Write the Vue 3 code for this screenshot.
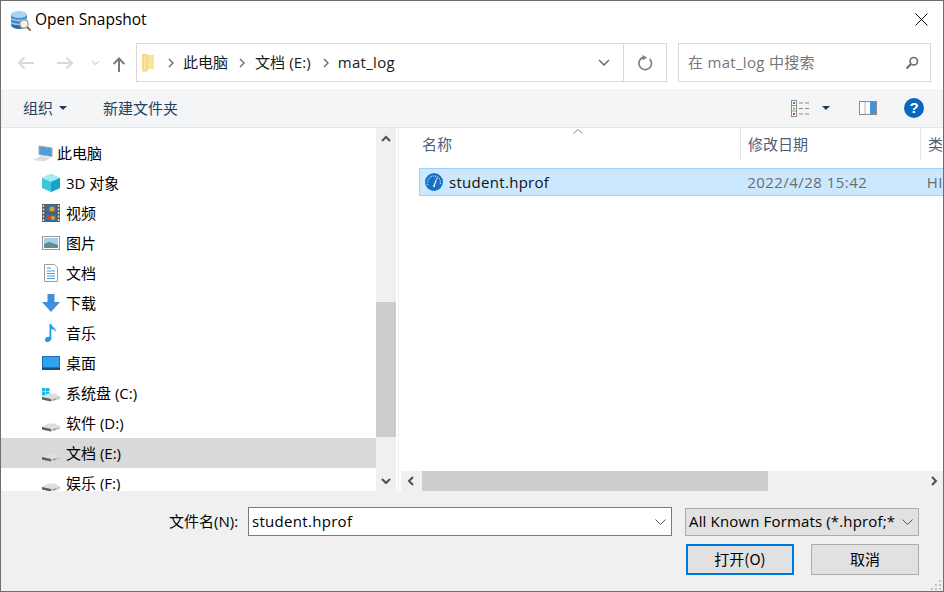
<script setup>
const nav = [
  { label: '3D 对象', icon: 'cube' },
  { label: '视频', icon: 'film' },
  { label: '图片', icon: 'pic' },
  { label: '文档', icon: 'doc' },
  { label: '下载', icon: 'down' },
  { label: '音乐', icon: 'music' },
  { label: '桌面', icon: 'desk' },
  { label: '系统盘 (C:)', icon: 'sys' },
  { label: '软件 (D:)', icon: 'drive' },
  { label: '文档 (E:)', icon: 'drive', active: true },
  { label: '娱乐 (F:)', icon: 'drive' },
]
</script>

<template>
  <div class="win">
    <header class="title">
      <svg class="appicon" width="22" height="22" viewBox="0 0 22 22">
        <ellipse cx="9" cy="15" rx="8" ry="4" fill="#2a70b0"/>
        <rect x="1" y="4" width="16" height="11" fill="#3f8fcf"/>
        <path d="M1 8.500c2 2.500 14 2.500 16 0M1 12.500c2 2.500 14 2.500 16 0" stroke="#cfe6f6" fill="none"/>
        <ellipse cx="9" cy="4.500" rx="8" ry="3.500" fill="#a9d3ee"/>
        <circle cx="14" cy="14" r="4.200" fill="#eef4f7" stroke="#9a9a90" stroke-width="1.300"/>
        <path d="M17 17l3.600 3.600" stroke="#8a6a4a" stroke-width="2"/>
      </svg>
      <span class="title-text">Open Snapshot</span>
      <svg class="close" width="13" height="13" viewBox="0 0 13 13"><path d="M.5.500l12 12M12.500.500l-12 12" stroke="#111" fill="none"/></svg>
    </header>

    <div class="addr">
      <svg class="nb" width="18" height="14" viewBox="0 0 18 14"><path d="M17 7H2M7.500 1.500L2 7l5.500 5.500" stroke="#d9d9d9" stroke-width="2" fill="none"/></svg>
      <svg class="nb nb2" width="18" height="14" viewBox="0 0 18 14"><path d="M1 7h15M10.500 1.500L16 7l-5.500 5.500" stroke="#d9d9d9" stroke-width="2" fill="none"/></svg>
      <svg class="nb nb3" width="9" height="6" viewBox="0 0 9 6"><path d="M1 1l3.500 3.500L8 1" stroke="#d9d9d9" stroke-width="1.500" fill="none"/></svg>
      <svg class="nb nb4" width="12" height="15" viewBox="0 0 12 15"><path d="M6 15V1.500M.7 7L6 1.500 11.300 7" stroke="#7a7a7a" stroke-width="2" fill="none"/></svg>
      <div class="crumbs">
        <svg class="folder" width="12" height="18" viewBox="0 0 12 18"><path d="M0 0h5l1 1v16l-4 1-2-1z" fill="#f3d98a"/><path d="M6 1h6v14H6z" fill="#fbe49a"/><path d="M3 2v15" stroke="#fdf0c4"/></svg>
        <svg class="sep" width="6" height="10" viewBox="0 0 6 10"><path d="M1 1l4 4-4 4" stroke="#707070" stroke-width="1.500" fill="none"/></svg>
        <span class="crumb c1">此电脑</span>
        <svg class="sep" width="6" height="10" viewBox="0 0 6 10"><path d="M1 1l4 4-4 4" stroke="#707070" stroke-width="1.500" fill="none"/></svg>
        <span class="crumb c2">文档 (E:)</span>
        <svg class="sep" width="6" height="10" viewBox="0 0 6 10"><path d="M1 1l4 4-4 4" stroke="#707070" stroke-width="1.500" fill="none"/></svg>
        <span class="crumb c3">mat_log</span>
        <svg class="ddn" width="12" height="7" viewBox="0 0 12 7"><path d="M1 1l5 5 5-5" stroke="#6d6d6d" stroke-width="1.500" fill="none"/></svg>
        <div class="refresh">
          <svg width="16" height="16" viewBox="0 0 16 16"><path d="M12.600 3.800A6.300 6.300 0 1 1 6 2.400" stroke="#808080" stroke-width="1.700" fill="none"/><path d="M5.500 0l4.500 2.500-4.500 3z" fill="#808080"/></svg>
        </div>
      </div>
      <div class="search">
        <span>在 mat_log 中搜索</span>
        <svg width="14" height="14" viewBox="0 0 14 14"><circle cx="8.800" cy="5.200" r="3.700" stroke="#6e6e6e" stroke-width="1.700" fill="none"/><path d="M6 8l-4.500 4.500" stroke="#6e6e6e" stroke-width="2.200"/></svg>
      </div>
    </div>

    <div class="toolbar">
      <span class="tb org">组织</span><i class="tri"></i>
      <span class="tb new">新建文件夹</span>
      <svg class="views" width="18" height="17" viewBox="0 0 18 17">
        <rect x=".5" y=".5" width="5" height="16" fill="#fff" stroke="#8d8d8d"/>
        <path d="M0 5.500h5M0 11h5" stroke="#8d8d8d"/>
        <rect x="2" y="2" width="2" height="2" fill="#3d7fc1"/><rect x="2" y="7.500" width="2" height="2" fill="#a2a13a"/><rect x="2" y="13" width="2" height="2" fill="#c5442a"/>
        <path d="M8 3h4M14 3h4M8 8.500h4M14 8.500h4M8 14h4M14 14h4" stroke="#8a8a8a"/>
      </svg>
      <i class="tri t2"></i>
      <svg class="pane" width="18" height="14" viewBox="0 0 18 14"><rect x=".5" y=".5" width="17" height="13" fill="#fff" stroke="#8c8c8c"/><rect x="11" y="1" width="6" height="12" fill="#3f96e0"/><path d="M6 1v12" stroke="#b5b5b5"/></svg>
      <div class="help">?</div>
    </div>

    <div class="body">
      <aside class="side">
        <ul class="tree">
          <li class="root">
            <svg width="20" height="17" viewBox="0 0 20 17"><path d="M6 1l13 2v8.500L6 9.500z" fill="#4c9ee0" stroke="#a6a6a6"/><path d="M0 15l8-4 10 2-7 3.500z" fill="#dcdcdc"/></svg>
            <span>此电脑</span>
          </li>
          <li v-for="n in nav" :key="n.label" class="item" :class="{ on: n.active }">
            <span class="ic">
              <svg v-if="n.icon === 'cube'" width="18" height="18" viewBox="0 0 18 18"><path d="M9 0l9 4v10l-9 4-9-4V4z" fill="#3fc4dc"/><path d="M9 0l9 4-9 4-9-4z" fill="#a4ecf4"/><path d="M9 8l9-4v10l-9 4z" fill="#1aa3c6"/></svg>
              <svg v-else-if="n.icon === 'film'" width="18" height="18" viewBox="0 0 18 18"><rect width="18" height="18" fill="#5a5a5a"/><path d="M1.500 1v16M16.500 1v16" stroke="#ddd" stroke-width="1.500" stroke-dasharray="2 1.500"/><rect x="4" y="1" width="10" height="7" fill="#2f6fb4"/><rect x="4" y="10" width="10" height="7" fill="#2f6fb4"/><circle cx="10" cy="5" r="2.500" fill="#d8a52c"/><circle cx="7" cy="13.500" r="2.500" fill="#c34a2c"/><circle cx="11" cy="14" r="2" fill="#d8a52c"/></svg>
              <svg v-else-if="n.icon === 'pic'" width="18" height="14" viewBox="0 0 18 14"><rect x=".5" y=".5" width="17" height="13" fill="#fff" stroke="#9a9a9a"/><rect x="2" y="2" width="14" height="10" fill="#a8cdea"/><path d="M2 8l5-2 9 3v3H2z" fill="#5e8f88"/></svg>
              <svg v-else-if="n.icon === 'doc'" width="14" height="18" viewBox="0 0 14 18"><path d="M.5.500h10l3 3v14H.5z" fill="#fff" stroke="#9c9c9c"/><path d="M3 4h4M3 7h8M3 9.500h8M3 12h8M3 14.500h8" stroke="#4a9bd8"/></svg>
              <svg v-else-if="n.icon === 'down'" width="18" height="18" viewBox="0 0 18 18"><path d="M5.500 0h7v8H18l-9 10L0 8h5.500z" fill="#3f8fdc"/></svg>
              <svg v-else-if="n.icon === 'music'" width="12" height="18" viewBox="0 0 12 18"><path d="M4.500 0h1.800c.3 3 4.700 3.500 4.700 8-1-2-3-3-4.700-3v9.500c0 2-2 3.500-4 3.500S0 16.800 0 15.300s2-3 4.500-2.500z" fill="#1e9be8"/></svg>
              <svg v-else-if="n.icon === 'desk'" width="18" height="14" viewBox="0 0 18 14"><rect width="18" height="13" fill="#1e6fb5"/><rect x="1" y="1" width="16" height="10" fill="#2ea3f2"/><rect y="12" width="18" height="2" fill="#14507f"/></svg>
              <svg v-else width="18" height="18" viewBox="0 0 18 18">
                <g v-if="n.icon === 'sys'"><rect x="0" y="4" width="3.500" height="3.500" fill="#18b4ec"/><rect x="4" y="4" width="3.500" height="3.500" fill="#18b4ec"/><rect x="0" y="8" width="3.500" height="3.500" fill="#18b4ec"/><rect x="4" y="8" width="3.500" height="3.500" fill="#18b4ec"/></g>
                <path d="M0 13L6 9.500h7l5 3-9 2.500z" fill="#dedede"/><path d="M0 13l9 2 9-2.500V15l-9 2.500L0 15.500z" fill="#c9c9c9"/><path d="M0 13l9 2v2.500L0 15.500z" fill="#5f5f5f"/><path d="M11 15.800l3-.8" stroke="#53c653" stroke-width="1.200"/>
              </svg>
            </span>
            <span class="lbl">{{ n.label }}</span>
          </li>
        </ul>
        <div class="vbar">
          <svg class="arr" width="10" height="7" viewBox="0 0 10 7"><path d="M1 6l4-4 4 4" stroke="#505050" stroke-width="2" fill="none"/></svg>
          <div class="vtrack"><div class="vthumb"></div></div>
          <svg class="arr" width="10" height="7" viewBox="0 0 10 7"><path d="M1 1l4 4 4-4" stroke="#505050" stroke-width="2" fill="none"/></svg>
        </div>
        <div class="gutter"></div>
      </aside>

      <main class="files">
        <div class="list">
          <div class="head">
            <div class="col name">名称<svg class="sort" width="10" height="5" viewBox="0 0 10 5"><path d="M.5 4.500l4.500-4 4.500 4" stroke="#8a8a8a" fill="none"/></svg></div>
            <div class="col date">修改日期</div>
            <div class="col type">类</div>
          </div>
          <div class="row">
            <svg width="18" height="18" viewBox="0 0 18 18"><circle cx="9" cy="9" r="9" fill="#1670c8"/><path d="M3 12A6.500 6.500 0 1 1 15 12" fill="none" stroke="#cfe8fa" stroke-width="1.300" stroke-dasharray="1 1.300"/><path d="M12 5L9.200 12.500" stroke="#fff" stroke-width="1.100"/><path d="M12 5l-1 2.600" stroke="#f08a5a" stroke-width="1.100"/><circle cx="9" cy="13" r="1" fill="#fff"/></svg>
            <span class="fname">student.hprof</span>
            <span class="fdate">2022/4/28 15:42</span>
            <span class="ftype">HI</span>
          </div>
        </div>
        <div class="hbar">
          <svg width="7" height="10" viewBox="0 0 7 10"><path d="M6 1L2 5l4 4" stroke="#505050" stroke-width="2" fill="none"/></svg>
          <div class="htrack"><div class="hthumb"></div></div>
          <svg width="7" height="10" viewBox="0 0 7 10"><path d="M1 1l4 4-4 4" stroke="#505050" stroke-width="2" fill="none"/></svg>
        </div>
      </main>
    </div>

    <footer class="foot">
      <div class="frow">
        <label>文件名(N):</label>
        <div class="fname-in">
          <span>student.hprof</span>
          <svg width="11" height="6" viewBox="0 0 11 6"><path d="M.5.500l5 5 5-5" stroke="#555" fill="none"/></svg>
        </div>
        <div class="filter">
          <span>All Known Formats (*.hprof;*</span>
          <svg width="11" height="6" viewBox="0 0 11 6"><path d="M.5.500l5 5 5-5" stroke="#555" fill="none"/></svg>
        </div>
      </div>
      <div class="brow">
        <button class="btn primary"><span>打开(O)</span></button>
        <button class="btn"><span>取消</span></button>
      </div>
      <svg class="grip" width="11" height="11" viewBox="0 0 11 11" fill="#c4c4c4"><rect x="8" y="0" width="2" height="2"/><rect x="4" y="4" width="2" height="2"/><rect x="8" y="4" width="2" height="2"/><rect x="0" y="8" width="2" height="2"/><rect x="4" y="8" width="2" height="2"/><rect x="8" y="8" width="2" height="2"/></svg>
    </footer>
  </div>
</template>

<style>
html, body { margin: 0; padding: 0; background: #fff; }
</style>

<style scoped>
* { box-sizing: border-box; }
.win {
  width: 944px; height: 592px; overflow: hidden; position: relative;
  border: 1px solid #6e6e6e; background: #fff; color: #000;
  font-family: "Noto Sans CJK SC", "Open Sans", sans-serif; font-size: 15px;
  display: flex; flex-direction: column;
}
.title { height: 39px; display: flex; align-items: center; padding-left: 9px; flex: none; }
.appicon { margin-right: 3px; }
.title-text { font-family: "Open Sans", sans-serif; font-size: 15.500px; margin-bottom: 3px; }
.close { margin-left: auto; margin-right: 15px; margin-bottom: 2px; }
.addr { height: 49px; flex: none; display: flex; align-items: flex-start; position: relative; padding: 3px 0 0 16px; }
.nb { margin-top: 13px; }
.nb2 { margin-left: 21px; }
.nb3 { margin-left: 17px; margin-top: 17px; }
.nb4 { margin-left: 13px; margin-top: 14px; margin-right: 2px; }
.crumbs {
  width: 531px; height: 39px; margin-left: 9px; border: 1px solid #d9d9d9;
  display: flex; align-items: center; padding-left: 5px; flex: none; color: #1a1a1a;
}
.folder { margin-right: 14px; }
.crumb { font-family: "Open Sans", "Noto Sans CJK SC", sans-serif; font-size: 15px; margin-bottom: 2px; }
.c1 { margin-left: 9px; margin-right: 11px; }
.c2 { margin-left: 10px; margin-right: 12px; letter-spacing: .1px; }
.c3 { margin-left: 9px; letter-spacing: .3px; }
.ddn { margin-left: auto; margin-right: 13px; }
.refresh { width: 43px; height: 37px; border-left: 1px solid #d9d9d9; display: flex; align-items: center; justify-content: center; }
.search {
  width: 253px; height: 39px; margin-left: 11px; border: 1px solid #d9d9d9;
  display: flex; align-items: center; justify-content: space-between; padding: 0 11px 0 9px;
  color: #767676; font-family: "Open Sans", "Noto Sans CJK SC", sans-serif; font-size: 15px; letter-spacing: .3px; flex: none;
}
.search span { margin-bottom: 2px; }
.toolbar { height: 39px; flex: none; background: #f4f5f7; border-bottom: 1px solid #e5e5e5; display: flex; align-items: center; position: relative; padding-left: 22px; }
.tb { color: #1f3f66; font-size: 15px; margin-bottom: 2px; }
.tri { width: 0; height: 0; border: 4px solid transparent; border-top: 4px solid #1c3a5e; border-bottom: 0; margin-left: 6px; }
.new { margin-left: 36px; }
.views { margin-left: auto; }
.t2 { margin-left: 13px; }
.pane { margin-left: 29px; }
.help { width: 20px; height: 20px; border-radius: 50%; background: #0a66bf; color: #fff; font: bold 15px/20px "Liberation Sans", sans-serif; text-align: center; margin: 0 19px 0 27px; }
.body { flex: 1; min-height: 0; display: flex; }
.side { width: 400px; flex: none; display: flex; padding-right: 2px; }
.gutter { width: 1px; margin-left: 2px; background: #f0f0f0; flex: none; }
.tree { list-style: none; margin: 0; padding: 10px 0 0; flex: 1; overflow: hidden; font-family: "Open Sans", "Noto Sans CJK SC", sans-serif; font-size: 15px; }
.tree li { height: 30px; display: flex; align-items: center; }
.root { padding-left: 32px; }
.root svg { margin-right: 4px; }
.root span, .lbl { margin-bottom: 2px; }
.item { padding-left: 40px; }
.ic { width: 25px; display: flex; justify-content: center; flex: none; }
.item .ic { width: 20px; margin-right: 5px; }
.on { background: #d9d9d9; }
.vbar { width: 20px; background: #f0f0f0; display: flex; flex-direction: column; align-items: center; flex: none; }
.arr { margin: 7px 0 6px; flex: none; }
.vtrack { flex: 1; width: 100%; padding-top: 154px; }
.vthumb { height: 135px; background: #cdcdcd; width: 100%; }
.files { flex: 1; min-width: 0; display: flex; flex-direction: column; }
.list { flex: 1; overflow: hidden; padding-left: 18px; }
.head { height: 34px; display: flex; color: #4c607a; font-size: 15px; }
.col { height: 32px; padding-left: 3px; padding-bottom: 2px; display: flex; align-items: center; border-right: 1px solid #e5e5e5; flex: none; position: relative; }
.col.name { width: 322px; }
.col.date { width: 180px; padding-left: 7px; }
.col.type { border: 0; padding-left: 7px; }
.sort { position: absolute; left: 154px; top: 1px; }
.row {
  height: 28px; margin-top: 6px; background: #cce8ff; border: 1px solid #99d1ff; border-right: 0;
  display: flex; align-items: center; padding-left: 5px; font-family: "Open Sans", sans-serif; font-size: 15px; letter-spacing: .45px;
}
.fname { margin-left: 6px; width: 299px; color: #111; letter-spacing: .3px; margin-bottom: 1px; }
.fdate { width: 180px; color: #6d6d6d; margin-bottom: 1px; }
.ftype { color: #6d6d6d; margin-bottom: 1px; }
.hbar { height: 20px; flex: none; background: #f0f0f0; display: flex; align-items: center; padding: 0 5px 0 6px; }
.htrack { flex: 1; height: 100%; padding: 0 5px; }
.hthumb { width: 346px; height: 100%; background: #cdcdcd; margin-left: 3px; }
.foot { height: 100px; flex: none; background: #f0f0f0; position: relative; padding-top: 16px; font-family: "Open Sans", "Noto Sans CJK SC", sans-serif; font-size: 15px; }
.frow { display: flex; align-items: center; height: 29px; }
label { margin-left: 168px; width: 79px; font-size: 15px; margin-bottom: 2px; }
.fname-in { width: 424px; height: 29px; background: #fff; border: 1px solid #7a7a7a; display: flex; align-items: center; justify-content: space-between; padding: 0 5px 0 3px; letter-spacing: .3px; }
.filter { width: 234px; height: 28px; margin-left: 13px; background: #e1e1e1; border: 1px solid #adadad; display: flex; align-items: center; justify-content: space-between; padding: 0 5px 0 3px; white-space: nowrap; letter-spacing: .15px; }
.fname-in span, .filter span { margin-bottom: 2px; }
.brow { display: flex; margin-top: 8px; padding-left: 685px; gap: 17px; }
.btn { width: 108px; height: 31px; background: #e1e1e1; border: 1px solid #adadad; font: 15px "Noto Sans CJK SC", sans-serif; color: #000; padding: 0 0 2px; }
.primary { border: 2px solid #0078d7; }
.grip { position: absolute; right: 1px; bottom: 0; }
</style>
